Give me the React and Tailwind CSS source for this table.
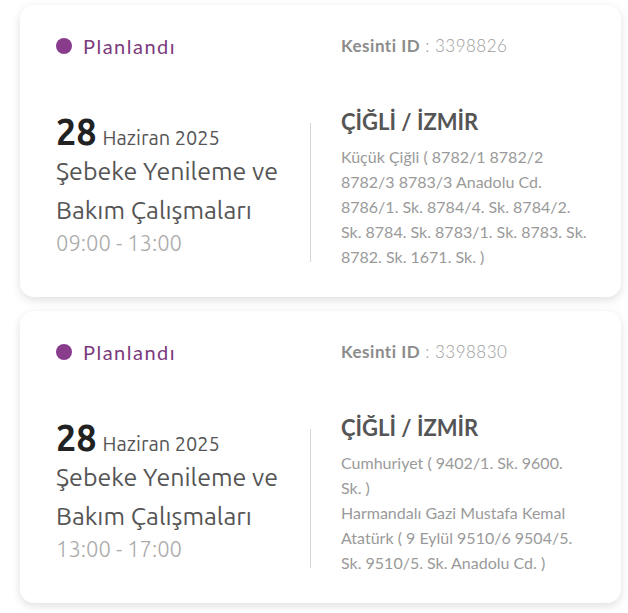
// ─── OUTAGE DATA ──────────────────────────────────────────────────────────────
// Each entry = one planned outage card
// address lines are split by hand so the wrapping matches the design
const outages = [
    {
        id: 3398826,
        status: 'Planlandı',
        day: '28',
        month: 'Haziran 2025',
        title: ['Şebeke Yenileme ve', 'Bakım Çalışmaları'],
        time: '09:00 - 13:00',
        city: 'ÇİĞLİ / İZMİR',
        address: [
            'Küçük Çiğli ( 8782/1 8782/2',
            '8782/3 8783/3 Anadolu Cd.',
            '8786/1. Sk. 8784/4. Sk. 8784/2.',
            'Sk. 8784. Sk. 8783/1. Sk. 8783. Sk.',
            '8782. Sk. 1671. Sk. )',
        ],
    },
    {
        id: 3398830,
        status: 'Planlandı',
        day: '28',
        month: 'Haziran 2025',
        title: ['Şebeke Yenileme ve', 'Bakım Çalışmaları'],
        time: '13:00 - 17:00',
        city: 'ÇİĞLİ / İZMİR',
        address: [
            'Cumhuriyet ( 9402/1. Sk. 9600.',
            'Sk. )',
            'Harmandalı Gazi Mustafa Kemal',
            'Atatürk ( 9 Eylül 9510/6 9504/5.',
            'Sk. 9510/5. Sk. Anadolu Cd. )',
        ],
    },
]

const leftFont = "font-['Ubuntu','Open_Sans',sans-serif]"
const rightFont = "font-['Lato','Inter',sans-serif]"

// ─── OUTAGE CARD ──────────────────────────────────────────────────────────────
function OutageCard({ outage }) {
    return (
        <div className="w-[601px] h-[292px] bg-white rounded-[14px] shadow-[0_3px_10px_rgba(0,0,0,0.13)] pl-[36px] pt-[29px]">

            {/* ── HEADER — status + outage id */}
            <div className="flex items-center h-[24px]">
                <div className="w-[285px] flex items-center gap-[11px]">
                    <span className="w-[16px] h-[16px] rounded-full bg-[#8a3c8c]" />
                    <span className={`${rightFont} text-[20px] tracking-[1.5px] text-[#7b3a7c] leading-[24px]`}>{outage.status}</span>
                </div>
                <div className={`${rightFont} text-[17px] tracking-[0.5px] text-[#8c8c8c] leading-[24px]`}>
                    <span className="font-bold">Kesinti ID</span>
                    <span className="text-[#9b9b9b] font-light"> : {outage.id}</span>
                </div>
            </div>

            {/* ── BODY — date/title on the left, location on the right */}
            <div className="flex items-start mt-[49px]">
                <div className={`${leftFont} w-[254px] mt-[5px]`}>
                    <div className="flex items-baseline gap-[6px] h-[40px]">
                        <span className="text-[36px] font-bold text-[#222] leading-[40px]">{outage.day}</span>
                        <span className="text-[20px] text-[#555] leading-[40px]">{outage.month}</span>
                    </div>
                    <div className="text-[25px] text-[#555] leading-[39px]">
                        {outage.title.map((line) => (
                            <div key={line}>{line}</div>
                        ))}
                    </div>
                    <div className="text-[22px] text-[#aaa] font-light leading-[25px]">{outage.time}</div>
                </div>

                {/* ── DIVIDER */}
                <div className="w-px h-[139px] bg-[#d6d6d6] mt-[16px]" />

                <div className={`${rightFont} pl-[30px]`}>
                    <div className="text-[22px] font-bold text-[#555] leading-[30px] mb-[7px]">{outage.city}</div>
                    <div className="text-[16px] text-[#9a9a9a] leading-[25px]">
                        {outage.address.map((line) => (
                            <div key={line}>{line}</div>
                        ))}
                    </div>
                </div>
            </div>
        </div>
    )
}

// ─── APP ──────────────────────────────────────────────────────────────────────
export default function App() {
    return (
        <div className="min-h-screen bg-white pl-[20px] pt-[5px] flex flex-col gap-[14px]">
            {outages.map((o) => (
                <OutageCard key={o.id} outage={o} />
            ))}
        </div>
    )
}
